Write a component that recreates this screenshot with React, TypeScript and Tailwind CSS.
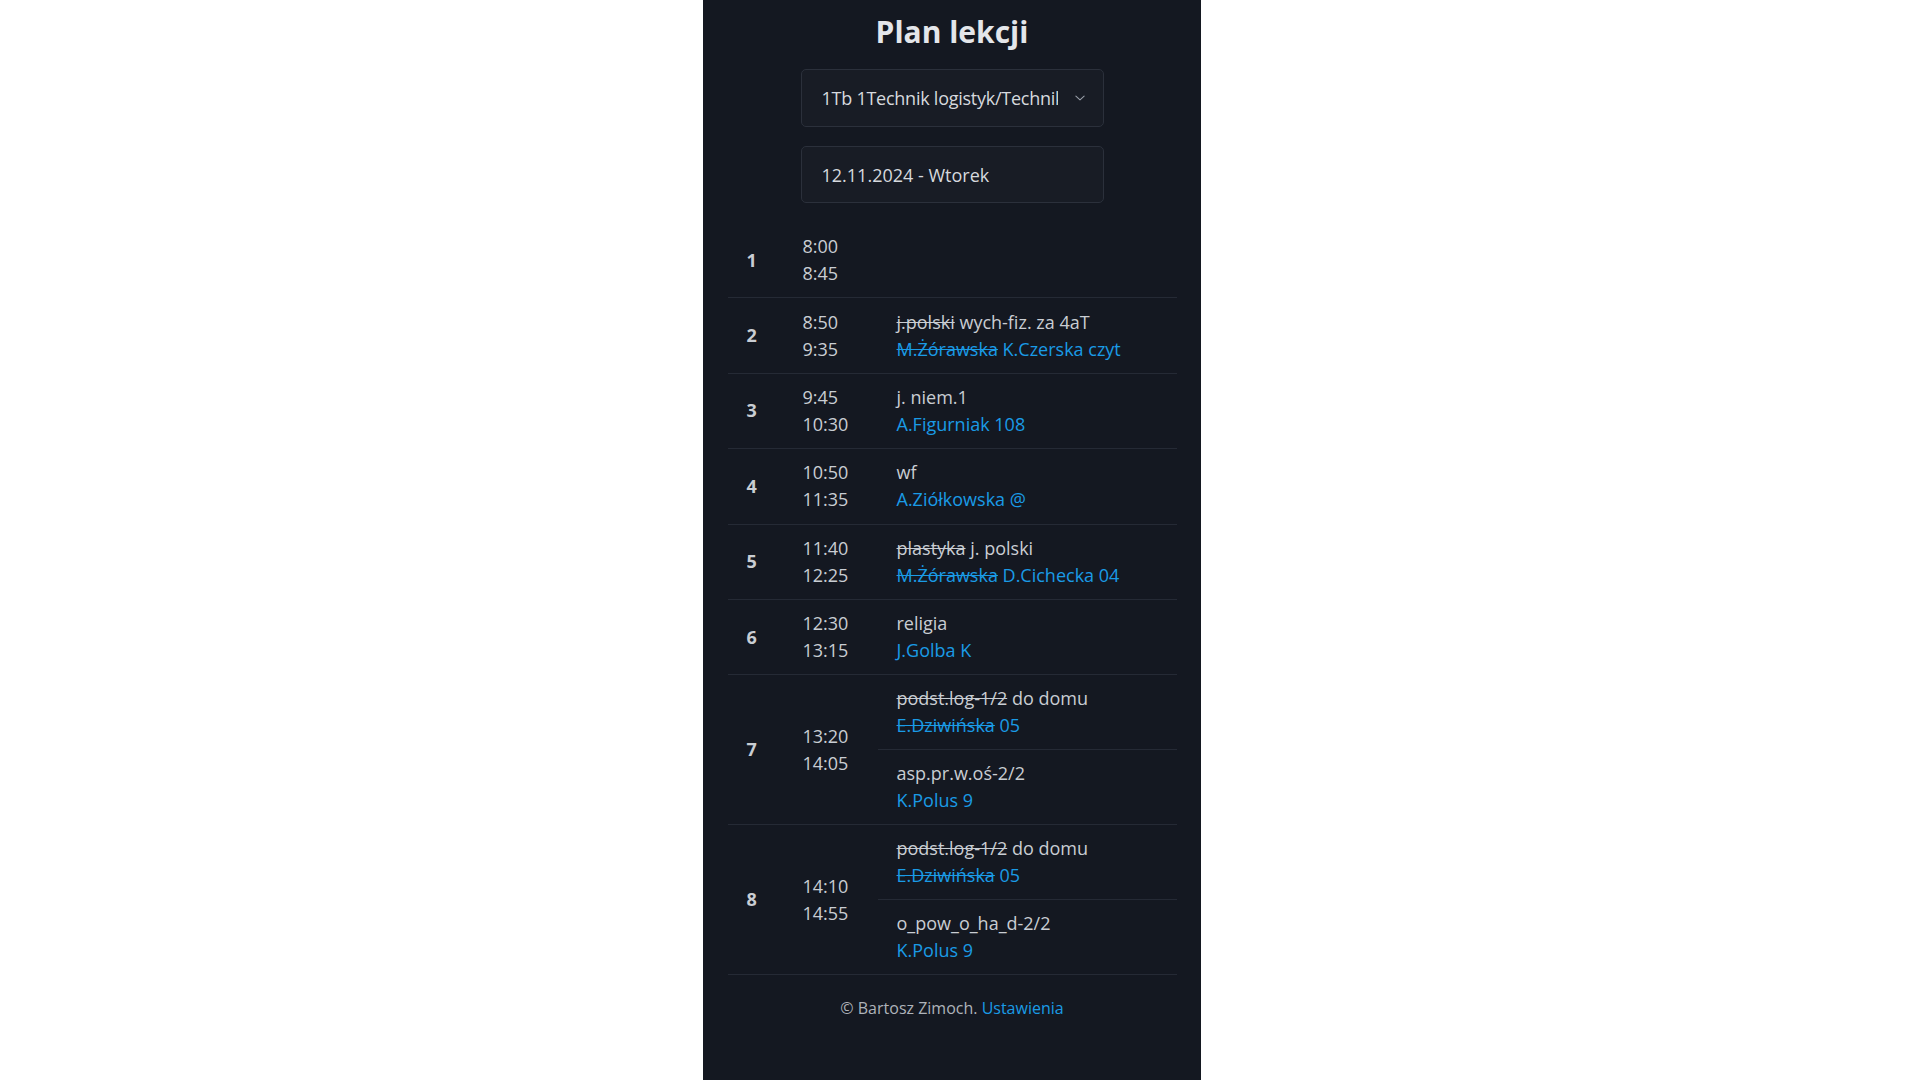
import React from "react";

type Part = { text: string; old?: boolean };
type Lesson = { subject: Part[]; teacher: Part[] };
type Slot = { nr: number; start: string; end: string; lessons: Lesson[] };

const schedule: Slot[] = [
  { nr: 1, start: "8:00", end: "8:45", lessons: [] },
  {
    nr: 2,
    start: "8:50",
    end: "9:35",
    lessons: [
      {
        subject: [{ text: "j.polski", old: true }, { text: "wych-fiz. za 4aT" }],
        teacher: [{ text: "M.Żórawska", old: true }, { text: "K.Czerska czyt" }],
      },
    ],
  },
  {
    nr: 3,
    start: "9:45",
    end: "10:30",
    lessons: [{ subject: [{ text: "j. niem.1" }], teacher: [{ text: "A.Figurniak 108" }] }],
  },
  {
    nr: 4,
    start: "10:50",
    end: "11:35",
    lessons: [{ subject: [{ text: "wf" }], teacher: [{ text: "A.Ziółkowska @" }] }],
  },
  {
    nr: 5,
    start: "11:40",
    end: "12:25",
    lessons: [
      {
        subject: [{ text: "plastyka", old: true }, { text: "j. polski" }],
        teacher: [{ text: "M.Żórawska", old: true }, { text: "D.Cichecka 04" }],
      },
    ],
  },
  {
    nr: 6,
    start: "12:30",
    end: "13:15",
    lessons: [{ subject: [{ text: "religia" }], teacher: [{ text: "J.Golba K" }] }],
  },
  {
    nr: 7,
    start: "13:20",
    end: "14:05",
    lessons: [
      {
        subject: [{ text: "podst.log-1/2", old: true }, { text: "do domu" }],
        teacher: [{ text: "E.Dziwińska", old: true }, { text: "05" }],
      },
      { subject: [{ text: "asp.pr.w.oś-2/2" }], teacher: [{ text: "K.Polus 9" }] },
    ],
  },
  {
    nr: 8,
    start: "14:10",
    end: "14:55",
    lessons: [
      {
        subject: [{ text: "podst.log-1/2", old: true }, { text: "do domu" }],
        teacher: [{ text: "E.Dziwińska", old: true }, { text: "05" }],
      },
      { subject: [{ text: "o_pow_o_ha_d-2/2" }], teacher: [{ text: "K.Polus 9" }] },
    ],
  },
];

function Parts({ parts }: { parts: Part[] }) {
  return (
    <>
      {parts.map((p, i) => (
        <React.Fragment key={i}>
          {i > 0 && " "}
          <span className={p.old ? "line-through" : ""}>{p.text}</span>
        </React.Fragment>
      ))}
    </>
  );
}

export default function App() {
  return (
    <div
      className="flex min-h-screen w-[1904px] justify-center bg-white"
      style={{ fontFamily: '"Open Sans", "Noto Sans", sans-serif' }}
    >
      <main className="flex min-h-screen w-[498px] flex-col items-center bg-[#141821] px-[25px] pt-[14px]">
        {/* Header */}
        <h1 className="text-[30px] font-bold leading-[36px] text-[#e4e6ea]">Plan lekcji</h1>

        <div className="mt-[19px] flex h-[58px] w-[303px] items-center rounded-[5px] border border-[#2b303b] bg-[#181c25] pl-[20px] pr-[17px]">
          <span className="w-[236px] overflow-hidden whitespace-nowrap text-[18px] tracking-[-0.25px] text-[#d6d9de]">
            1Tb 1Technik logistyk/Technik logistyk
          </span>
          <svg className="ml-auto h-[12px] w-[12px] text-[#9aa0aa]" viewBox="0 0 16 16" fill="none">
            <path d="M2.5 5.5l5.5 5 5.5-5" stroke="currentColor" strokeWidth="1.4" strokeLinecap="round" strokeLinejoin="round" />
          </svg>
        </div>

        <div className="mt-[19px] flex h-[57px] w-[303px] items-center rounded-[5px] border border-[#2b303b] bg-[#181c25] pl-[20px] pt-[2px]">
          <span className="text-[18px] text-[#d6d9de]">12.11.2024 - Wtorek</span>
        </div>

        {/* Timetable */}
        <div className="mt-[20px] w-[449px] text-[18px] leading-[27px]">
          {schedule.map((slot) => (
            <div key={slot.nr} className="flex border-b border-[#252a35]">
              <div className="flex w-[75px] items-center pl-[19px] font-bold text-[#c9cdd3]">{slot.nr}</div>
              <div className="flex w-[75px] flex-col justify-center text-[#c9cdd3]">
                <span>{slot.start}</span>
                <span>{slot.end}</span>
              </div>
              <div className="flex flex-1 flex-col">
                {slot.lessons.length === 0 ? (
                  <div className="h-[74.4px]" />
                ) : (
                  slot.lessons.map((l, i) => (
                    <div
                      key={i}
                      className={
                        "flex h-[74.4px] flex-col justify-center pl-[19px] " +
                        (i < slot.lessons.length - 1 ? "border-b border-[#252a35]" : "")
                      }
                    >
                      <span className="text-[#c9cdd3]">
                        <Parts parts={l.subject} />
                      </span>
                      <span className="text-[#1a9be6]">
                        <Parts parts={l.teacher} />
                      </span>
                    </div>
                  ))
                )}
              </div>
            </div>
          ))}
        </div>

        {/* Footer */}
        <footer className="mt-[21px] text-[16px] text-[#aeb3ba]">
          © Bartosz Zimoch. <span className="text-[#1a9be6]">Ustawienia</span>
        </footer>
      </main>
    </div>
  );
}
